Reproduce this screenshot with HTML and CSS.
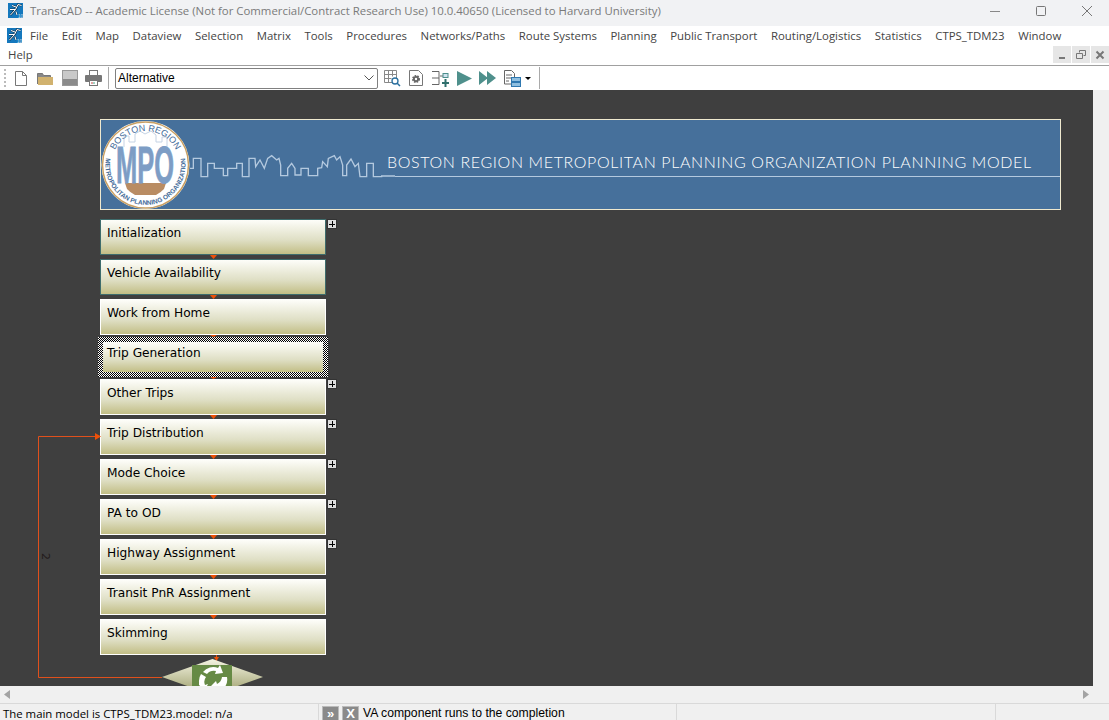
FILE: index.html
```html
<!DOCTYPE html>
<html lang="en">
<head>
    <meta charset="UTF-8">
    <meta name="viewport" content="width=device-width, initial-scale=1.0">
    <title>TransCAD</title>
    <link rel="stylesheet" href="styles.css">
</head>
<body>
    <div class="app">
        <div class="titlebar">
            <svg class="app-icon" viewBox="0 0 15 15">
                <rect width="15" height="15" fill="#1578bd"/>
                <path d="M2 6.500h5.500L2.500 12M7.500 6.500L10 1.500l3.500 1M4 2.500l4 1.500M8 8.500L9 12" fill="none" stroke="#12344f" stroke-width="2"/>
                <path d="M2 6.500h5.500L2.500 12M7.500 6.500L10 1.500l3.500 1M4 2.500l4 1.500M8 8.500L9 12" fill="none" stroke="#fff"/>
                <text class="icon-ver" x="10" y="14.500">10</text>
            </svg>
            <span class="title-text">TransCAD -- Academic License (Not for Commercial/Contract Research Use) 10.0.40650 (Licensed to Harvard University)</span>
            <div class="win-buttons">
                <svg width="12" height="12" viewBox="0 0 12 12"><path d="M1 6.500h10" stroke="#888"/></svg>
                <svg width="12" height="12" viewBox="0 0 12 12"><rect x="1.500" y="1.500" width="9" height="9" rx="1" fill="none" stroke="#777"/></svg>
                <svg width="12" height="12" viewBox="0 0 12 12"><path d="M1 1l10 10M11 1L1 11" stroke="#777"/></svg>
            </div>
        </div>

        <div class="menubar">
            <div class="menu-row">
                <svg class="app-icon menu-icon" viewBox="0 0 15 15">
                    <rect width="15" height="15" fill="#1578bd"/>
                    <path d="M2 6.500h5.500L2.500 12M7.500 6.500L10 1.500l3.500 1M4 2.500l4 1.500M8 8.500L9 12" fill="none" stroke="#12344f" stroke-width="2"/>
                    <path d="M2 6.500h5.500L2.500 12M7.500 6.500L10 1.500l3.500 1M4 2.500l4 1.500M8 8.500L9 12" fill="none" stroke="#fff"/>
                    <text class="icon-ver" x="10" y="14.500">10</text>
                </svg>
                <span>File</span>
                <span>Edit</span>
                <span>Map</span>
                <span>Dataview</span>
                <span>Selection</span>
                <span>Matrix</span>
                <span>Tools</span>
                <span>Procedures</span>
                <span>Networks/Paths</span>
                <span>Route Systems</span>
                <span>Planning</span>
                <span>Public Transport</span>
                <span>Routing/Logistics</span>
                <span>Statistics</span>
                <span>CTPS_TDM23</span>
                <span>Window</span>
            </div>
            <div class="menu-row second">
                <span>Help</span>
                <div class="mdi-buttons">
                    <div class="mdi-btn"><svg width="10" height="10" viewBox="0 0 10 10"><path d="M2 8h6" stroke="#777" stroke-width="2"/></svg></div>
                    <div class="mdi-btn"><svg width="10" height="10" viewBox="0 0 10 10"><path d="M3.500 2.500V.5h6v5h-2M.5 3.500h6v5h-6z" fill="none" stroke="#777"/></svg></div>
                    <div class="mdi-btn"><svg width="10" height="10" viewBox="0 0 10 10"><path d="M1.500 1.500l7 7M8.500 1.500l-7 7" stroke="#777" stroke-width="2"/></svg></div>
                </div>
            </div>
        </div>

        <div class="toolbar">
            <div class="grip"></div>
            <svg class="tool new" width="14" height="17" viewBox="0 0 14 17"><path d="M1.500 1.500h7l4 4v10h-11z" fill="#fff" stroke="#777"/><path d="M8.500 1.500v4h4" fill="none" stroke="#777"/></svg>
            <svg class="tool open" width="17" height="15" viewBox="0 0 17 15"><path d="M.5 13V2.500h5l1 2h7V6" fill="#888" stroke="#777"/><path d="M1 14V6h15v8z" fill="#d1b26f"/></svg>
            <svg class="tool save" width="16" height="16" viewBox="0 0 16 16"><rect x=".5" y=".5" width="15" height="15" fill="#c9c9c9" stroke="#999"/><rect x="1" y="9" width="14" height="6" fill="#8b8b8b"/></svg>
            <svg class="tool print" width="17" height="16" viewBox="0 0 17 16"><rect x="4.500" y=".5" width="8" height="5" fill="#fff" stroke="#777"/><rect x="0" y="5" width="17" height="7" rx="1" fill="#777"/><rect x="4.500" y="10.500" width="8" height="5" fill="#fff" stroke="#777"/><path d="M6 13h2" stroke="#c44"/><path d="M8 13h2" stroke="#4a8"/></svg>
            <div class="sep first"></div>
            <div class="combo">
                <span>Alternative</span>
                <svg width="10" height="6" viewBox="0 0 10 6"><path d="M.5.500L5 5 9.500.5" fill="none" stroke="#555"/></svg>
            </div>
            <svg class="tool lookup" width="17" height="17" viewBox="0 0 17 17"><path d="M.5.500h12v12H.5zM.5 4.500h12M.5 8.500h7M4.500.5v12M8.500.5v6" fill="#fff" stroke="#888"/><circle cx="11" cy="11" r="3" fill="#fff" stroke="#2a6f9e" stroke-width="1.300"/><path d="M13 13l3 3" stroke="#2a6f9e" stroke-width="1.500"/></svg>
            <svg class="tool gear" width="14" height="16" viewBox="0 0 14 16"><path d="M.5.500h9l4 4v11H.5z" fill="#fff" stroke="#777"/><circle cx="7" cy="9" r="3" fill="#666" stroke="#666" stroke-width="2" stroke-dasharray="1.500 1"/><circle cx="7" cy="9" r="1.200" fill="#fff"/></svg>
            <svg class="tool step" width="17" height="17" viewBox="0 0 17 17"><path d="M0 1.500h7v13H0M0 8h7M8 6h5" fill="none" stroke="#666"/><rect x="11" y="3.500" width="5" height="4" fill="#cfe3ef" stroke="#4d8f8c"/><path d="M13.500 9v8M10 13h7" stroke="#2f6f6c" stroke-width="2"/></svg>
            <svg class="tool play" width="15" height="15" viewBox="0 0 15 15"><path d="M0 0l15 7.500L0 15z" fill="#4f908c"/></svg>
            <svg class="tool ffwd" width="17" height="14" viewBox="0 0 17 14"><path d="M0 0l9 7-9 7zM8 0l9 7-9 7z" fill="#4f908c"/></svg>
            <svg class="tool report" width="17" height="17" viewBox="0 0 17 17"><path d="M.5.500h7l3 3V14H.5zM2 5h6M2 8h6M2 11h3" fill="#fff" stroke="#666"/><rect x="7.500" y="7.500" width="9" height="4" fill="#8fbfe0" stroke="#2f78b0"/><rect x="7.500" y="12.500" width="9" height="4" fill="#8fbfe0" stroke="#2f78b0"/></svg>
            <div class="caret"></div>
            <div class="sep last"></div>
        </div>

        <div class="work">
            <div class="canvas">
                <svg class="banner" width="961" height="91" viewBox="0 0 961 91">
                    <rect x=".5" y=".5" width="960" height="90" fill="#46709b" stroke="#efe9cf"/>
                    <g transform="translate(-5 -4) scale(.33333)">
                        <polyline class="skyline" points="285,160 295,160 295,130 318,130 318,185 338,185 338,145 358,145 358,160 385,160 385,182 398,182 398,160 425,160 425,145 442,145 442,185 462,185 462,130 480,130 482,155 495,135 508,160 518,130 530,122 545,135 552,130 557,150 557,182 578,182 578,160 590,145 600,160 600,180 618,180 618,160 640,160 640,182 668,182 668,160 680,158 683,140 697,155 700,130 718,122 725,135 735,125 743,150 743,182 755,182 755,150 768,132 780,155 790,145 795,185 815,185 815,145 835,145 835,185 860,185 860,183 900,183"/>
                    </g>
                    <path class="rule" d="M295 57.500h665"/>
                    <text class="banner-title" x="287" y="49" textLength="644" lengthAdjust="spacing">BOSTON REGION METROPOLITAN PLANNING ORGANIZATION PLANNING MODEL</text>

                    <circle cx="45.500" cy="46" r="44" fill="#fff"/>
                    <circle cx="45.500" cy="46" r="43" fill="none" stroke="#c9a063" stroke-width="1.500"/>
                    <polyline points="24,28 24,17 29,17 29,23 35,23 35,15 40,12 45,15 51,12 56,16 56,23 62,23 62,18 67,18 67,28" fill="none" stroke="#c5d3e4"/>
                    <path d="M25 64h41l-2 6a28 28 0 0 1-8 6H35a28 28 0 0 1-8-6z" fill="#b98c63"/>
                    <text class="logo-mpo" x="45" y="64" textLength="58" lengthAdjust="spacingAndGlyphs">MPO</text>
                    <path id="arc-top" d="M11.500 46a34 34 0 0 1 68 0" fill="none"/>
                    <path id="arc-bottom" d="M6.100 39a40 40 0 1 0 78.800 0" fill="none"/>
                    <text class="logo-top"><textPath href="#arc-top" startOffset="50%" text-anchor="middle">BOSTON REGION</textPath></text>
                    <text class="logo-bottom"><textPath href="#arc-bottom" startOffset="50%" text-anchor="middle">METROPOLITAN PLANNING ORGANIZATION</textPath></text>
                </svg>

                <div class="flow">
                    <div class="node teal">Initialization<span class="plus"></span></div>
                    <div class="node teal">Vehicle Availability</div>
                    <div class="node">Work from Home</div>
                    <div class="node selected">Trip Generation</div>
                    <div class="node">Other Trips<span class="plus"></span></div>
                    <div class="node">Trip Distribution<span class="plus"></span></div>
                    <div class="node">Mode Choice<span class="plus"></span></div>
                    <div class="node">PA to OD<span class="plus"></span></div>
                    <div class="node">Highway Assignment<span class="plus"></span></div>
                    <div class="node">Transit PnR Assignment</div>
                    <div class="node">Skimming</div>
                </div>

                <!-- links and the loop diamond, in page coordinates -->
                <svg class="links" width="1093" height="596" viewBox="0 90 1093 596">
                    <defs>
                        <linearGradient id="diamond" x1="0" y1="0" x2="0" y2="1">
                            <stop offset="0" stop-color="#f4f4e2"/>
                            <stop offset="1" stop-color="#9a9c68"/>
                        </linearGradient>
                    </defs>
                    <path d="M210 255h7l-3.500 4zM210 295h7l-3.500 4zM210 335h7l-3.500 2zM210 377h7l-3.500 2zM210 415h7l-3.500 4zM210 455h7l-3.500 4zM210 495h7l-3.500 4zM210 535h7l-3.500 4zM210 575h7l-3.500 4zM210 615h7l-3.500 4z" fill="#ee5008"/>
                    <path d="M162 677.500H38.500V436.500H96" fill="none" stroke="#e0501c"/>
                    <path d="M95 433l6 3.500-6 3.500z" fill="#ee5008"/>
                    <path d="M216.500 655v6" stroke="#ee5008"/>
                    <path d="M214 657h5l-2.500 4z" fill="#ee5008"/>
                    <path d="M212.500 659L263 677l-50.500 18L162 677z" fill="url(#diamond)"/>
                    <rect x="192" y="665" width="40" height="24" fill="#668a45"/>
                    <path d="M203 672a13 13 0 0 1 15-4l2-3 3 8-8 1 1-3a9 9 0 0 0-9 3zM199 682a13 13 0 0 1 2-8l5 3a8 8 0 0 0-1 8l3-1-3 6-6-5zM227 677a13 13 0 0 1-4 12h-6l-1 3-5-6 5-5 1 3a9 9 0 0 0 5-7z" fill="#fff"/>
                </svg>
                <span class="link-label">2</span>
            </div>
            <div class="vstrip"></div>
        </div>

        <div class="hscroll">
            <svg width="6" height="9" viewBox="0 0 6 9"><path d="M6 0v9L0 4.500z" fill="#a3a3a3"/></svg>
            <svg width="6" height="9" viewBox="0 0 6 9"><path d="M0 0v9l6-4.500z" fill="#a3a3a3"/></svg>
        </div>

        <div class="statusbar">
            <div class="pane main">The main model is CTPS_TDM23.model: n/a</div>
            <div class="pane progress">
                <span class="status-btn next">&raquo;</span>
                <span class="status-btn stop">X</span>
                <span class="status-text">VA component runs to the completion</span>
            </div>
            <div class="pane mid"></div>
            <div class="pane end"></div>
        </div>
    </div>
</body>
</html>
```

FILE: styles.css
```css
* {
    box-sizing: border-box;
}
body {
    margin: 0;
    font-family: "Open Sans", "Noto Sans", sans-serif;
    overflow: hidden;
}
.app {
    width: 1109px;
    height: 720px;
    display: flex;
    flex-direction: column;
    background-color: #fff;
}

/* title bar */
.titlebar {
    height: 26px;
    flex: none;
    display: flex;
    align-items: center;
    background-color: #f1f2f4;
    padding: 0 0 5px 8px;
}
.app-icon {
    width: 15px;
    height: 15px;
    flex: none;
}
.icon-ver {
    font-family: "Liberation Sans", sans-serif;
    font-size: 4.500px;
    fill: #cfe3f2;
}
.title-text {
    margin-left: 7px;
    font-size: 11.400px;
    color: #7a7a7a;
    white-space: nowrap;
}
.win-buttons {
    margin-left: auto;
    display: flex;
    gap: 34px;
    padding-right: 16px;
}

/* menu */
.menubar {
    height: 39px;
    flex: none;
    background-color: #fff;
}
.menu-row {
    display: flex;
    align-items: center;
    height: 18px;
    gap: 13.600px;
    font-size: 11.400px;
    color: #444;
    white-space: nowrap;
    padding-left: 7px;
}
.menu-icon {
    margin-right: -5.600px;
}
.second {
    height: 20px;
    padding-left: 8px;
}
.mdi-buttons {
    margin: 1px 0 0 auto;
    display: flex;
    gap: 1px;
}
.mdi-btn {
    width: 18px;
    height: 17px;
    background-color: #e6e6e6;
    display: flex;
    align-items: center;
    justify-content: center;
}

/* toolbar */
.toolbar {
    height: 25px;
    flex: none;
    display: flex;
    align-items: center;
    border-top: 1px solid #a0a0a0;
    background-color: #fff;
}
.grip {
    width: 2px;
    height: 18px;
    margin-left: 4px;
    background: repeating-linear-gradient(#bbb 0 2px, #fff 2px 4px);
}
.tool {
    flex: none;
}
.new { margin-left: 8px; }
.open { margin-left: 9px; }
.save { margin-left: 8px; }
.print { margin-left: 7px; }
.sep {
    width: 1px;
    height: 22px;
    background-color: #aaa;
    flex: none;
}
.first { margin-left: 6px; }
.combo {
    width: 263px;
    height: 21px;
    margin-left: 6px;
    padding: 0 3px 0 2px;
    border: 1px solid #808080;
    border-radius: 2px;
    display: flex;
    align-items: center;
    justify-content: space-between;
    font-family: "Liberation Sans", sans-serif;
    font-size: 12px;
    color: #000;
    flex: none;
}
.lookup { margin-left: 6px; }
.gear { margin-left: 8px; }
.step { margin-left: 9px; }
.play { margin-left: 8px; }
.ffwd { margin-left: 7px; }
.report { margin-left: 8px; }
.caret {
    width: 0;
    height: 0;
    margin-left: 4px;
    border-left: 3px solid transparent;
    border-right: 3px solid transparent;
    border-top: 3px solid #000;
}
.last { margin-left: 8px; }

/* model canvas */
.work {
    flex: 1;
    display: flex;
    min-height: 0;
}
.canvas {
    flex: 1;
    position: relative;
    overflow: hidden;
    background-color: #3f3f3f;
    padding: 29px 0 0 100px;
}
.vstrip {
    width: 16px;
    flex: none;
    background-color: #f0f0f0;
}
.banner {
    display: block;
}
.skyline {
    fill: none;
    stroke: #b4c9df;
    stroke-width: 4;
}
.rule {
    fill: none;
    stroke: #b4c9df;
}
.banner-title {
    font-family: Lato, sans-serif;
    font-weight: 300;
    font-size: 16px;
    fill: #fff;
}
.logo-mpo {
    font-family: "Liberation Sans", sans-serif;
    font-weight: bold;
    font-size: 52px;
    fill: #7d9dc5;
    stroke: #7d9dc5;
    stroke-width: .8;
    text-anchor: middle;
}
.logo-top {
    font-family: "Liberation Sans", sans-serif;
    font-size: 9px;
    fill: #3f6a98;
}
.logo-bottom {
    font-family: "Liberation Sans", sans-serif;
    font-size: 6.500px;
    font-weight: bold;
    fill: #3f6a98;
}

.flow {
    width: 226px;
    margin-top: 9px;
    display: flex;
    flex-direction: column;
    gap: 4px;
}
.node {
    position: relative;
    height: 36px;
    padding: 6px 0 0 6px;
    border: 1px solid #fff;
    background: linear-gradient(#fdfdf9, #dedec3 60%, #c2be86);
    font-family: "DejaVu Sans", sans-serif;
    font-size: 12.200px;
    line-height: 15px;
    color: #000;
    white-space: nowrap;
}
.teal {
    border-color: #3e6c6c;
}
.selected {
    width: 230px;
    height: 40px;
    margin: -2px 0 -2px -2px;
    padding: 4px 0 0 4px;
    border: 5px solid transparent;
    background: linear-gradient(#fdfdf9, #dedec3 60%, #c2be86) padding-box,
        repeating-conic-gradient(#000 0 25%, #fff 0 50%) 0 0 / 2px 2px border-box;
}
.plus {
    position: absolute;
    left: 226px;
    top: -1px;
    width: 10px;
    height: 10px;
    border: 1px solid #333;
    background: linear-gradient(#000, #000) center / 6px 1px no-repeat,
        linear-gradient(#000, #000) center / 1px 6px no-repeat,
        #ddd;
}
.links {
    position: absolute;
    left: 0;
    top: 0;
}
.link-label {
    position: absolute;
    left: 42px;
    top: 460px;
    font-family: "DejaVu Sans", sans-serif;
    font-size: 11px;
    line-height: 13px;
    color: #221a1a;
    transform: rotate(90deg);
}

/* bottom scrollbar and status */
.hscroll {
    height: 17px;
    flex: none;
    display: flex;
    align-items: center;
    justify-content: space-between;
    padding: 0 20px 0 4px;
    background-color: #f0f0f0;
}
.statusbar {
    height: 17px;
    flex: none;
    display: flex;
    border-top: 1px solid #d9d9d9;
    background-color: #f0f0f0;
    color: #000;
    white-space: nowrap;
}
.pane {
    height: 16px;
    padding-top: 2px;
    display: flex;
    align-items: center;
    border-right: 1px solid #d9d9d9;
}
.main {
    width: 319px;
    padding-left: 3px;
    font-size: 11.400px;
}
.progress {
    width: 358px;
    padding-left: 3px;
    gap: 3px;
}
.status-btn {
    width: 17px;
    height: 15px;
    display: flex;
    align-items: center;
    justify-content: center;
    background-color: #8a8a8a;
    border: 1px solid #bbb;
    color: #fff;
    font-family: "Liberation Sans", sans-serif;
    font-size: 13px;
    font-weight: bold;
}
.status-text {
    margin-left: 1px;
    font-family: "Liberation Sans", sans-serif;
    font-size: 12.200px;
}
.mid {
    width: 319px;
}
.end {
    flex: 1;
    border-right: none;
}
```
